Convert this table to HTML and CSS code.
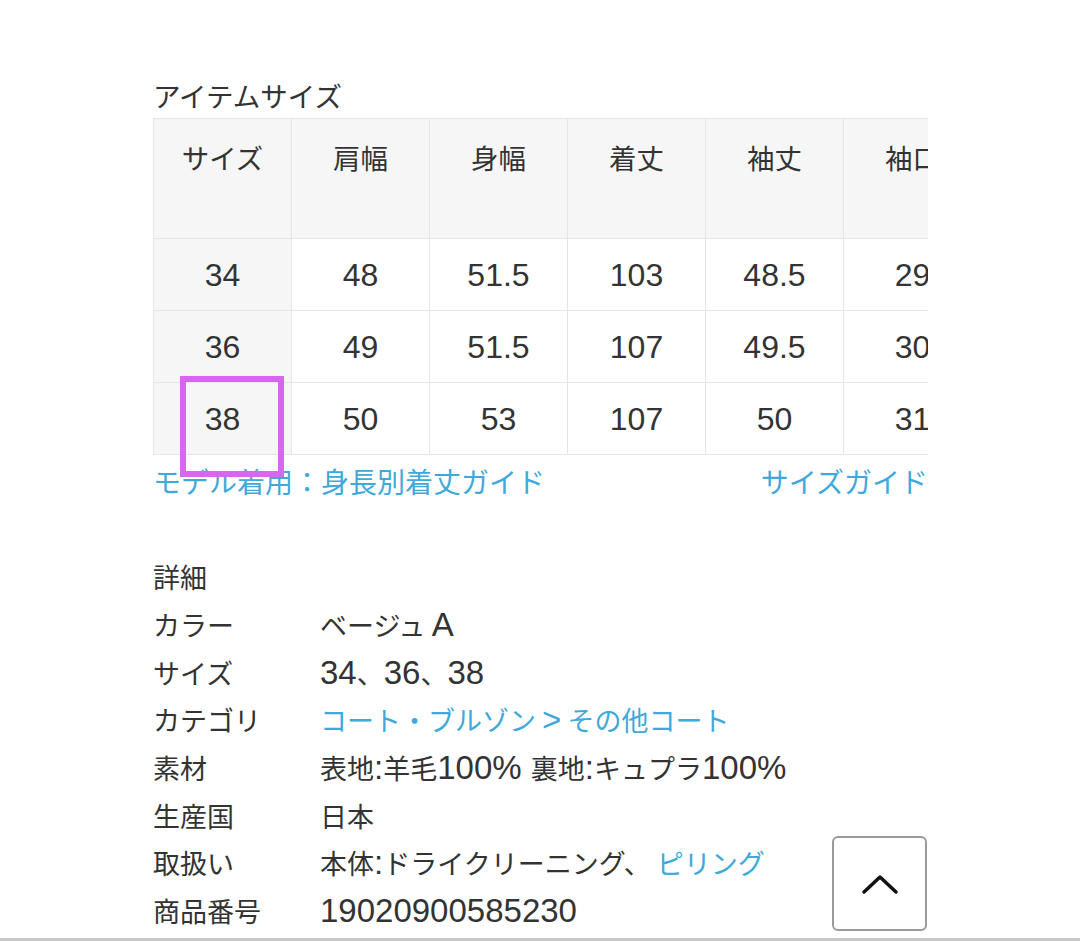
FILE: index.html
```html
<!DOCTYPE html>
<html lang="ja">
<head>
<meta charset="utf-8">
<link rel="stylesheet" href="styles.css">
</head>
<body>
<main class="page">
  <section class="sizes">
    <h2 class="title">アイテムサイズ</h2>
    <div class="table-area">
      <div class="table-wrap">
        <table class="size-table">
          <thead>
            <tr><th>サイズ</th><th>肩幅</th><th>身幅</th><th>着丈</th><th>袖丈</th><th>袖口</th></tr>
          </thead>
          <tbody>
            <tr><th>34</th><td>48</td><td>51.5</td><td>103</td><td>48.5</td><td>29</td></tr>
            <tr><th>36</th><td>49</td><td>51.5</td><td>107</td><td>49.5</td><td>30</td></tr>
            <tr><th>38</th><td>50</td><td>53</td><td>107</td><td>50</td><td>31</td></tr>
          </tbody>
        </table>
      </div>
      <div class="mark"></div>
    </div>
    <div class="links">
      <a class="link">モデル着用：身長別着丈ガイド</a>
      <a class="link">サイズガイド</a>
    </div>
  </section>
  <section class="details">
    <h2 class="detail-title">詳細</h2>
    <dl class="spec">
      <div class="row"><dt>カラー</dt><dd>ベージュ <span class="num">A</span></dd></div>
      <div class="row"><dt>サイズ</dt><dd><span class="num">34</span>、<span class="num">36</span>、<span class="num">38</span></dd></div>
      <div class="row"><dt>カテゴリ</dt><dd><a class="link">コート・ブルゾン <span class="num">&gt;</span> その他コート</a></dd></div>
      <div class="row"><dt>素材</dt><dd>表地<span class="num">:</span>羊毛<span class="num">100% </span>裏地<span class="num">:</span>キュプラ<span class="num">100%</span></dd></div>
      <div class="row"><dt>生産国</dt><dd>日本</dd></div>
      <div class="row"><dt>取扱い</dt><dd>本体<span class="num">:</span>ドライクリーニング、 <a class="link">ピリング</a></dd></div>
      <div class="row"><dt>商品番号</dt><dd><span class="num">19020900585230</span></dd></div>
    </dl>
  </section>
</main>
<button class="to-top" aria-label="ページトップへ">
  <svg width="40" height="24" viewBox="0 0 40 24"><path d="M4 20 L20 5 L36 20" fill="none" stroke="#111" stroke-width="3.5" stroke-linecap="round" stroke-linejoin="round"/></svg>
</button>
<div class="bottom-line"></div>
</body>
</html>
```

FILE: styles.css
```css
html, body {
  margin: 0;
  padding: 0;
  background: #fff;
}
body {
  font-family: "Noto Sans CJK JP", "Noto Sans", sans-serif;
  color: #333;
  font-size: 27px;
  overflow: hidden;
  height: 941px;
}
.page {
  margin-left: 153px;
  width: 775px;
  padding-top: 76px;
}
.title {
  margin: 0 0 4px 0;
  font-size: 27.5px;
  font-weight: normal;
  line-height: 38px;
}
.num {
  font-family: "Liberation Sans", "Noto Sans CJK JP", sans-serif;
  font-size: 33px;
}
.table-area {
  position: relative;
}
.table-wrap {
  width: 775px;
  overflow: hidden;
}
.size-table {
  border-collapse: collapse;
  table-layout: fixed;
  width: 828px;
}
.size-table th,
.size-table td {
  width: 138px;
  border: 1px solid #e6e6e6;
  text-align: center;
  font-weight: normal;
  padding: 0;
  font-size: 27.5px;
  line-height: 38px;
}
.size-table thead th {
  background: #f6f6f6;
  height: 120px;
  vertical-align: top;
  padding-top: 19px;
  box-sizing: border-box;
}
.size-table tbody th,
.size-table tbody td {
  height: 71px;
  vertical-align: middle;
  font-family: "Liberation Sans", "Noto Sans CJK JP", sans-serif;
  font-size: 32px;
}
.size-table tbody th {
  background: #f6f6f6;
}
.mark {
  position: absolute;
  left: 27px;
  top: 258px;
  width: 104px;
  height: 101px;
  box-sizing: border-box;
  border: 6px solid #d966ee;
  z-index: 2;
}
.links {
  display: flex;
  justify-content: space-between;
  margin-top: 7px;
  line-height: 38px;
  font-size: 28px;
}
.link {
  color: #3fa9da;
  text-decoration: none;
}
.details {
  margin-top: 53px;
}
.detail-title {
  margin: 0;
  font-size: 27px;
  font-weight: normal;
  line-height: 48px;
}
.spec {
  margin: 0;
}
.row {
  display: flex;
  line-height: 47.67px;
  height: 47.67px;
}
.row dt {
  width: 167px;
  flex: none;
}
.row dd {
  margin: 0;
  white-space: nowrap;
}
.to-top {
  position: fixed;
  left: 832px;
  top: 836px;
  width: 95px;
  height: 95px;
  box-sizing: border-box;
  border: 2px solid #9a9a9a;
  border-radius: 6px;
  background: #fff;
  display: flex;
  align-items: center;
  justify-content: center;
  padding: 0;
}
.bottom-line {
  position: fixed;
  left: 0;
  right: 0;
  bottom: 0;
  height: 3px;
  background: #c8c8c8;
}
```
